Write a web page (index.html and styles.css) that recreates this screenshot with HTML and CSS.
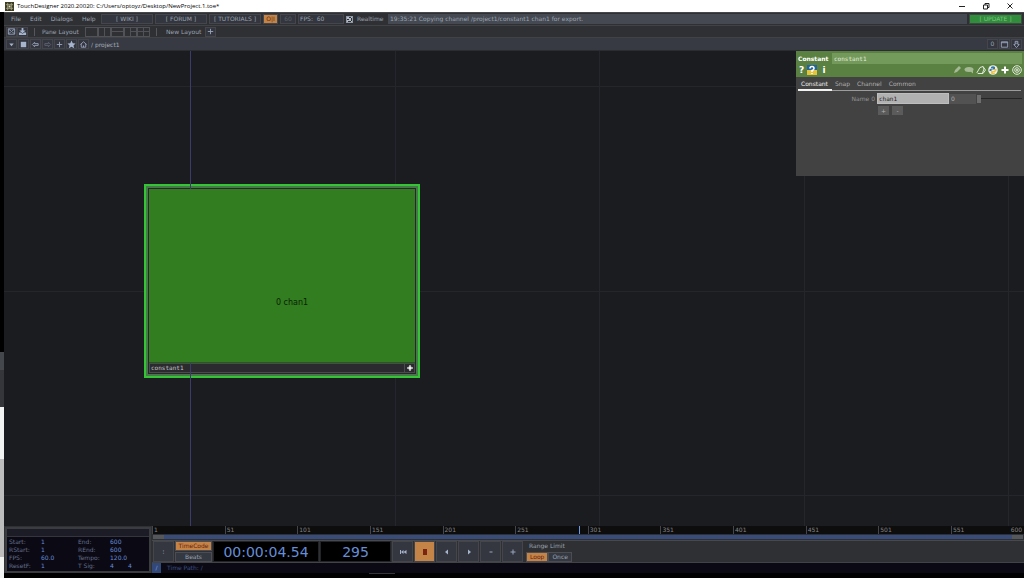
FILE: index.html
```html
<!DOCTYPE html>
<html lang="en">
<head>
<meta charset="utf-8">
<title>TouchDesigner</title>
<link rel="stylesheet" href="styles.css">
</head>
<body>
<header class="titlebar">
  <svg class="app-icon" viewBox="0 0 10 10"><rect width="10" height="10" fill="#3c3d22"/><path d="M1 3h8M1 7h8M3 1v8M7 1v8" stroke="#a5a184" stroke-width="1"/><rect x="4" y="4" width="2" height="2" fill="#e4e0c0"/></svg>
  <h1 class="title">TouchDesigner 2020.20020: C:/Users/optoyz/Desktop/NewProject.1.toe*</h1>
  <button class="win" aria-label="Minimize"><svg viewBox="0 0 8 8"><path d="M1 4.500h6" /></svg></button>
  <button class="win" aria-label="Restore"><svg viewBox="0 0 8 8"><path d="M1.500 3h4v4h-4zM3 3V1.500h4v4H5.500"/></svg></button>
  <button class="win" aria-label="Close"><svg viewBox="0 0 8 8"><path d="M1.500 1.500l5 5m0-5l-5 5"/></svg></button>
</header>
<div class="desktop">
  <div class="edge"><div class="edge-gray"></div><div class="edge-white"><div class="edge-thumb"></div></div></div>
  <main class="app">
    <div class="bar menubar">
      <nav class="menus"><button>File</button><button>Edit</button><button>Dialogs</button><button>Help</button></nav>
      <a class="box link" href="#wiki">[ WIKI ]</a>
      <a class="box link" href="#forum">[ FORUM ]</a>
      <a class="box link" href="#tutorials">[ TUTORIALS ]</a>
      <button class="box oi">O|I</button>
      <span class="box rate">60</span>
      <span class="box fps">FPS:&nbsp; 60</span>
      <label class="realtime"><input type="checkbox" class="check" checked>Realtime</label>
      <output class="status">19:35:21 Copying channel /project1/constant1 chan1 for export.</output>
      <button class="box update">[ UPDATE ]</button>
    </div>
    <div class="bar layoutbar">
      <button class="box sq" aria-label="Browser"><svg viewBox="0 0 10 10"><path d="M1.500 2h7v6h-7zM2 2.500l3 2.500 3-2.500M2 7.500l2-2m4 2l-2-2"/></svg></button>
      <button class="box sq" aria-label="Palette"><svg viewBox="0 0 10 10"><path class="fill" d="M4 1h2v3h2.500L5 7 1.500 4H4zM1 6h2l2 1.500L7 6h2v3H1z"/></svg></button>
      <span class="sep"></span>
      <span class="bar-label">Pane Layout</span>
      <span class="panes">
        <button class="pane" aria-label="Single"></button>
        <button class="pane cols" aria-label="Columns"></button>
        <button class="pane rows" aria-label="Rows"></button>
        <button class="pane half" aria-label="Three"></button>
        <button class="pane cols rows" aria-label="Four"></button>
      </span>
      <span class="sep"></span>
      <span class="bar-label new">New Layout</span>
      <button class="box sq" aria-label="Add layout"><svg viewBox="0 0 10 10"><path d="M5 2v6M2 5h6"/></svg></button>
    </div>
    <div class="bar pathbar">
      <button class="box sq" aria-label="Pane type"><svg viewBox="0 0 10 10"><path class="fill" d="M2.500 4h5L5 7z"/></svg></button>
      <button class="box sq" aria-label="Stop"><svg viewBox="0 0 10 10"><path class="fill" d="M2 2h6v6H2z"/></svg></button>
      <button class="box sq" aria-label="Back"><svg viewBox="0 0 10 10"><path d="M1.500 5L4 2.500V4h4v2H4v1.500z"/></svg></button>
      <button class="box sq dim" aria-label="Forward"><svg viewBox="0 0 10 10"><path d="M8.500 5L6 2.500V4H2v2h4v1.500z"/></svg></button>
      <button class="box sq" aria-label="Add"><svg viewBox="0 0 10 10"><path d="M5 2v6M2 5h6"/></svg></button>
      <button class="box sq" aria-label="Bookmark"><svg viewBox="0 0 10 10"><path class="fill" d="M5 .5l1.400 3 3.100.4L7.200 6l.8 3.300L5 7.600 2 9.300 2.800 6 .5 3.900l3.100-.4z"/></svg></button>
      <button class="box sq" aria-label="Home"><svg viewBox="0 0 10 10"><path d="M1.500 5L5 2l3.500 3M2.500 4.500V8h5V4.500M5 8V6"/></svg></button>
      <input class="path" value="/ project1" aria-label="Network path">
      <button class="box sq">0</button>
      <button class="box sq" aria-label="Window"><svg viewBox="0 0 10 10"><path d="M1.500 2h7v6h-7zM1.500 3h7"/></svg></button>
      <button class="box sq" aria-label="Pin"><svg viewBox="0 0 10 10"><path d="M3.500 1.500h3V5H8L5 8.500 2 5h1.500zM3.500 3.500h3"/></svg></button>
    </div>

    <section class="network">
      <i class="v axis"></i><i class="v v1"></i><i class="v v2"></i><i class="v v3"></i><i class="v v4"></i>
      <i class="h h1"></i><i class="h h2"></i><i class="h h3"></i>
      <article class="node">
        <div class="node-in">
          <div class="viewer">0 chan1</div>
          <div class="node-foot"><span class="node-name">constant1</span><button class="plus" aria-label="Viewer active"><svg viewBox="0 0 10 10"><path d="M5 1.500v7M1.500 5h7" stroke-width="2"/><path d="M3.500 3.500l3 3m0-3l-3 3"/></svg></button></div>
        </div>
      </article>
      <aside class="params">
        <div class="params-head">
          <div class="head-row"><label class="op-type" for="opname">Constant</label><input class="op-name" id="opname" value="constant1"></div>
          <div class="head-row icons">
            <button class="glyph narrow">?</button>
            <button class="glyph" aria-label="Python help"><svg viewBox="0 0 10 10"><path fill="#23659e" d="M0 0h10v5H0z"/><path fill="#e4c33d" d="M0 5h10v5H0z"/><path d="M3 3.500Q3 1.500 5 1.500t2 2Q7 5 5 5.500V7M5 8v1" fill="none" stroke="#fff" stroke-width="1.500"/></svg></button>
            <button class="glyph">i</button>
            <span class="push"></span>
            <button class="glyph" aria-label="Edit"><svg viewBox="0 0 10 10"><path d="M2 8l1-3 4-4 2 2-4 4z" fill="#a4b994"/></svg></button>
            <button class="glyph" aria-label="Comment"><svg viewBox="0 0 10 10"><ellipse cx="5" cy="4.500" rx="4.500" ry="2.500" fill="#a4b994"/><path d="M6 6l3 2.500V5z" fill="#a4b994"/></svg></button>
            <button class="glyph" aria-label="Copy"><svg viewBox="0 0 10 10"><path d="M1 7.500L4 2.500l3-1L9.500 5 7 8.500H2zM7 1.500L8 4 6.500 8" fill="none" stroke="#dfe8d8"/></svg></button>
            <button class="glyph" aria-label="Python"><svg viewBox="0 0 10 10"><circle cx="5" cy="5" r="4.800" fill="#eef0e8"/><path d="M3 2q2-1.500 4 0v2.500H3.500V6H1.500Q.8 4 3 3.500h2V3H3z" fill="#3675a9"/><path d="M7 8.500q-2 1.200-4 0V6h3.500V4h2Q9.200 6 7 7H5v.5h2z" fill="#efc541"/></svg></button>
            <button class="glyph" aria-label="Add parameter"><svg viewBox="0 0 10 10"><path d="M5 1.500v7M1.500 5h7" stroke="#fff" stroke-width="2"/></svg></button>
            <button class="glyph" aria-label="Target"><svg viewBox="0 0 10 10"><g fill="none" stroke="#e4ebdf"><circle cx="5" cy="5" r="4.300"/><circle cx="5" cy="5" r="2.300"/></g><circle cx="5" cy="5" r="1" fill="#e4ebdf"/></svg></button>
          </div>
        </div>
        <nav class="tabs"><button class="tab on">Constant</button><button class="tab">Snap</button><button class="tab">Channel</button><button class="tab">Common</button></nav>
        <div class="param"><label for="name0">Name 0</label><input class="name0" id="name0" value="chan1"><input class="val0" value="0" aria-label="Value 0"><input type="range" class="slider" min="0" max="100" value="0" aria-label="Value 0 slider"></div>
        <div class="addrow"><button>+</button><button>-</button></div>
      </aside>
    </section>

    <footer class="timeline">
      <div class="info">
        <div class="info-top"></div>
        <dl class="info-grid">
          <dt>Start:</dt><dd>1</dd><dt>End:</dt><dd>600</dd><dd></dd>
          <dt>RStart:</dt><dd>1</dd><dt>REnd:</dt><dd>600</dd><dd></dd>
          <dt>FPS:</dt><dd>60.0</dd><dt>Tempo:</dt><dd class="wide">120.0</dd>
          <dt>ResetF:</dt><dd>1</dd><dt>T Sig:</dt><dd>4</dd><dd>4</dd>
        </dl>
      </div>
      <div class="transport">
        <div class="ruler"><span>1</span><span>51</span><span>101</span><span>151</span><span>201</span><span>251</span><span>301</span><span>351</span><span>401</span><span>451</span><span>501</span><span class="last">551<b>600</b></span><i class="playhead"></i></div>
        <div class="range"><i></i><i></i></div>
        <div class="controls">
          <button class="ctl">⁝</button>
          <div class="modes"><button class="mode on">TimeCode</button><button class="mode">Beats</button></div>
          <output class="lcd tc">00:00:04.54</output>
          <output class="lcd fr">295</output>
          <button class="ctl" aria-label="To start"><svg viewBox="0 0 10 10"><path class="fill" d="M2 3h1v4H2zM5.500 3v4L3 5zM8.500 3v4L5.500 5z"/></svg></button>
          <button class="ctl on" aria-label="Pause"><svg viewBox="0 0 10 10"><path class="pause" d="M3 2h4v6H3z"/></svg></button>
          <button class="ctl" aria-label="Play reverse"><svg viewBox="0 0 10 10"><path class="fill" d="M6 2.500v5L3 5z"/></svg></button>
          <button class="ctl" aria-label="Play"><svg viewBox="0 0 10 10"><path class="fill" d="M4 2.500v5L7 5z"/></svg></button>
          <button class="ctl" aria-label="Step back"><svg viewBox="0 0 10 10"><path d="M3.500 5h3"/></svg></button>
          <button class="ctl" aria-label="Step forward"><svg viewBox="0 0 10 10"><path d="M5 2.500v5M2.500 5h5"/></svg></button>
          <div class="limit"><span>Range Limit</span><div class="limit-btns"><button class="mode on">Loop</button><button class="mode">Once</button></div></div>
        </div>
        <div class="timepath"><button class="slash">/</button><span>Time Path: /</span></div>
      </div>
    </footer>
    <div class="grip"></div>
  </main>
</div>
</body>
</html>
```
FILE: styles.css
```css
* { box-sizing: border-box; margin: 0; padding: 0; }
body {
  height: 100vh;
  display: flex;
  flex-direction: column;
  overflow: hidden;
  background: #000;
  color: #9aa3b1;
  font: 6px/8px "DejaVu Sans", sans-serif;
}
button, input, output { font: inherit; color: inherit; border: 0; background: none; border-radius: 0; min-width: 0; }
button { display: flex; align-items: center; justify-content: center; white-space: nowrap; }
a { color: inherit; text-decoration: none; }
svg { display: block; flex: none; width: 10px; height: 10px; fill: none; stroke: #98a4bc; stroke-width: 1; }
svg rect, svg circle, svg ellipse { stroke: none; }
svg g circle { stroke: inherit; }
.fill { fill: #a6b4ce; stroke: none; }
.pause { fill: #7a2412; stroke: none; }

/* window title */
.titlebar { display: flex; align-items: center; height: 12px; flex: none; padding: 0 7px 0 5px; background: #fff; color: #111; }
.app-icon { width: 9px; height: 9px; margin-right: 3px; }
.title { flex: 1; font: 6px/12px "Open Sans", sans-serif; color: #000; }
.win { width: 24px; height: 12px; }
.win:last-child { width: 15px; margin-left: 4px; }
.win svg { width: 8px; height: 8px; stroke: #222; }

.desktop { flex: 1; display: flex; min-height: 0; }
.edge { width: 4px; display: flex; flex-direction: column; justify-content: flex-end; background: #000; }
.edge-gray { height: 55px; background: linear-gradient(#44484c 33%, #35363a 33%); }
.edge-white { height: 171px; background: #f2f3f3; padding-top: 52px; }
.edge-thumb { height: 98px; background: #bdbdbd; }
.app { flex: 1; min-width: 0; display: flex; flex-direction: column; background: #2f3034; }

/* toolbars */
.bar { display: flex; align-items: center; flex: none; border-bottom: 1px solid #404246; padding: 0 2px 0 1px; }
.box { height: 10px; border: 1px solid #44464c; background: #33363e; }
.sq { width: 11px; flex: none; }
.sq svg { width: 9px; height: 9px; }
.dim svg { opacity: .4; }
.menubar { height: 14px; gap: 2px; border-top: 1px solid #45474b; }
.menus { display: flex; gap: 9px; width: 94px; padding-left: 6px; }
.link { width: 52px; text-align: center; }
.oi { width: 15px; background: #c58443; color: #5c2914; }
.rate { width: 16px; text-align: center; color: #5c5f68; }
.fps { width: 46px; padding-left: 1px; }
.realtime { display: flex; align-items: center; gap: 4px; width: 40px; }
.check { appearance: none; width: 7px; height: 7px; border: 1px solid #8f98a6; background: linear-gradient(45deg, transparent 40%, #b4bcc8 40% 60%, transparent 60%), linear-gradient(-45deg, transparent 40%, #b4bcc8 40% 60%, transparent 60%); }
.status { flex: 1; height: 10px; line-height: 10px; padding-left: 2px; background: #454951; color: #9aa4b2; }
.update { width: 53px; background: #318c3c; color: #7ac67c; border-color: #3a4a40; }
.layoutbar { height: 12px; padding-left: 2px; }
.sep { width: 1px; height: 8px; background: #55575c; margin: 0 6px; }
.bar-label { width: 44px; padding-left: 1px; }
.new { width: 42px; padding-left: 3px; }
.panes { display: flex; }
.pane { width: 13px; height: 10px; border: 1px solid #505258; background-repeat: no-repeat; background-position: center; }
.cols { background-image: linear-gradient(#505258, #505258); background-size: 1px 100%; }
.rows { background-image: linear-gradient(#505258, #505258); background-size: 100% 1px; }
.half { background-image: linear-gradient(#505258, #505258), linear-gradient(#505258, #505258); background-size: 1px 100%, 50% 1px; background-position: center, right center; }
.cols.rows { background-image: linear-gradient(#505258, #505258), linear-gradient(#505258, #505258); background-size: 1px 100%, 100% 1px; }
.pathbar { height: 13px; gap: 1px; padding-left: 2px; background: #373a43; border-color: #2b2c30; }
.path { flex: 1; height: 10px; padding-left: 1px; color: #a5adba; }

/* network editor */
.network { position: relative; flex: 1; min-height: 0; background: #1b1c20; overflow: hidden; }
.v, .h { position: absolute; background: #25262b; }
.v { top: 0; bottom: 0; width: 1px; }
.h { left: 0; right: 0; height: 1px; }
.axis { left: 186px; background: #3b3b6c; z-index: 1; }
.v1 { left: 391px; }
.v2 { left: 595px; }
.v3 { left: 800px; }
.v4 { left: 1004px; }
.h1 { top: 35px; }
.h2 { top: 240px; }
.h3 { top: 444px; }
.node { position: absolute; left: 140px; top: 133px; width: 276px; height: 194px; border: 2px solid #35c436; background: #47774b; padding: 2px; }
.node-in { height: 100%; display: flex; flex-direction: column; border: 1px solid #252a28; background: #2b2b2f; }
.viewer { position: relative; z-index: 2; flex: 1; background: #317d1f; border-bottom: 1px solid #225c18; color: #0b1f06; font-size: 8px; padding: 55px 0 0 20px; display: flex; align-items: center; justify-content: center; }
.node-foot { display: flex; height: 10px; border: 1px solid #4a4b4e; color: #c5c6c8; font-family: "DejaVu Sans Mono", monospace; }
.node-name { flex: 1; padding-left: 1px; }
.plus { width: 10px; border-left: 1px solid #4a4b4e; }
.plus svg { width: 8px; height: 8px; stroke: #eee; }

/* parameter dialog */
.params { position: absolute; top: 0; right: 0; width: 228px; height: 125px; background: #424242; color: #b0b0b0; z-index: 3; }
.params-head { height: 26px; background: #5a8141; padding: 2px 2px 0; font-family: "DejaVu Sans Mono", monospace; }
.head-row { display: flex; align-items: center; height: 11px; }
.op-type { width: 34px; color: #fff; font-family: "DejaVu Sans", sans-serif; font-weight: bold; white-space: nowrap; }
.op-name { flex: 1; height: 11px; padding-left: 2px; background: #739a5b; color: #e2ebdc; }
.icons { gap: 2px; }
.glyph { width: 10px; height: 10px; color: #fff; font: bold 9px/10px "DejaVu Sans", sans-serif; }
.narrow { width: 7px; }
.glyph svg { stroke: none; }
.push { flex: 1; }
.tabs { display: flex; height: 14px; margin: 0 3px 0 2px; padding-top: 2px; border-bottom: 1px solid #9c9c9c; }
.tab { height: 10px; padding: 0 4px 0 3px; }
.tab.on { height: 12px; padding: 0 4px 0 3px; color: #eee; border-bottom: 2px solid #f2f2f2; }
.param { display: flex; align-items: center; margin-top: 2px; padding-right: 2px; }
.param label { width: 81px; padding-right: 2px; text-align: right; color: #949494; }
.name0 { width: 72px; height: 11px; padding-left: 1px; background: #b1b1b1; border: 1px solid #bebebe; color: #1c1c1c; font-family: "DejaVu Sans Mono", monospace; }
.val0 { width: 27px; height: 10px; padding-left: 2px; background: #525252; }
.slider { appearance: none; flex: 1; height: 8px; margin-left: 1px; background: linear-gradient(#262626, #262626) center / 100% 1px no-repeat; }
.slider::-webkit-slider-thumb { appearance: none; width: 4px; height: 8px; background: #6e6e6e; }
.addrow { display: flex; gap: 3px; margin: 2px 0 0 82px; }
.addrow button { width: 11px; height: 9px; background: #5b5b5b; }

/* timeline */
.timeline { display: flex; flex: none; height: 47px; background: #2f3034; }
.info { width: 146px; margin: 1px 1px 0; border: 2px solid #3b3c40; background: #0b0a14; }
.info-top { height: 8px; background: #1b1c25; border-bottom: 1px solid #34353d; }
.info-grid { display: grid; grid-template-columns: 32px 37px 32px 18px 1fr; padding: 1px 0 0 2px; color: #65708f; }
.info-grid dd { color: #668ddb; }
.wide { grid-column: span 2; }
.transport { flex: 1; min-width: 0; }
.ruler { position: relative; display: flex; height: 8px; background: #0d0d0e; color: #858585; }
.ruler span { flex: 50; padding-left: 1px; border-left: 1px solid #45454a; }
.ruler .last { flex: 49; display: flex; justify-content: space-between; padding-right: 2px; }
.ruler b { font-weight: normal; }
.playhead { position: absolute; left: 49%; top: 0; width: 1px; height: 8px; background: #6d98e5; }
.range { display: flex; justify-content: space-between; height: 6px; background: #394c78; border: 1px solid #2d3036; }
.range i { width: 11px; background: #55575a; }
.controls { display: flex; align-items: center; height: 23px; padding-left: 1px; gap: 1px; border-top: 1px solid #47494c; border-bottom: 1px solid #414347; }
.ctl { width: 21px; height: 21px; border: 1px solid #44464b; background: #343740; }
.ctl.on { background: #c58447; }
.modes { display: flex; flex-direction: column; gap: 1px; width: 37px; }
.mode { height: 10px; padding: 0 3px; border: 1px solid #4b4d53; background: #343841; }
.mode.on { background: #c58447; color: #65200f; }
.lcd { height: 21px; background: #000; border: 1px solid #222327; color: #668ed8; font-size: 14px; line-height: 21px; text-align: center; }
.tc { width: 106px; }
.fr { width: 71px; }
.limit { display: flex; flex-direction: column; gap: 1px; padding-left: 2px; }
.limit > span { padding-left: 3px; line-height: 10px; }
.limit-btns { display: flex; }
.timepath { display: flex; height: 10px; line-height: 10px; background: #0b0a14; color: #3c5188; }
.slash { width: 9px; background: #324878; color: #7ea1e0; margin-right: 6px; }
.grip { flex: none; height: 5px; background: linear-gradient(#35363a, #35363a) 365px 0 / 26px 1px no-repeat #000; }
```
